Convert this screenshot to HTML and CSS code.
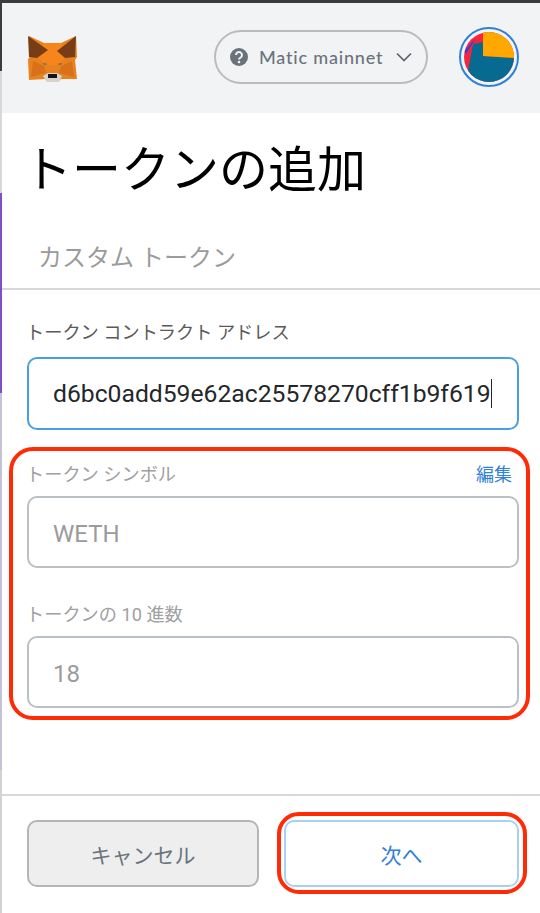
FILE: index.html
```html
<!DOCTYPE html>
<html lang="ja">
<head>
    <meta charset="UTF-8">
    <meta name="viewport" content="width=device-width, initial-scale=1.0">
    <title>トークンの追加</title>
    <link rel="stylesheet" href="styles.css">
</head>
<body>
    <div class="top-edge"></div>
    <div class="window">
        <!-- page behind the popup, only a sliver of it shows -->
        <div class="behind">
            <div class="behind-dark"></div>
            <div class="behind-light"></div>
            <div class="behind-purple"></div>
            <div class="behind-lavender"></div>
            <div class="behind-grey"></div>
        </div>

        <div class="popup">
            <header class="app-bar">
                <svg class="fox" viewBox="0 0 50 48" aria-hidden="true">
                    <polygon fill="#e8821e" points="1,1 16,8 33,8 48,1 49,22 47,25 49,44 33,44 30,47 20,47 17,44 1,45 0,24 2,22"/>
                    <polygon fill="#f6851b" points="16,8 33,8 37,23 31,30 19,30 10,23"/>
                    <polygon fill="#d9701a" points="5,26 16,31 18,38 3,42"/>
                    <polygon fill="#d9701a" points="44,26 33,31 31,38 46,42"/>
                    <polygon fill="#763d16" points="0,1 20,15 9,23 1,22"/>
                    <polygon fill="#763d16" points="48,1 29,16 37,23 47,22"/>
                    <polygon fill="#d7d2cc" points="15,41 20,38 29,38 34,41 31,47 19,47"/>
                    <polygon fill="#161616" points="20,39 29,39 29,43 20,43"/>
                    <polygon fill="#5c6b7a" points="15,28 20,29 16,30"/>
                    <polygon fill="#5c6b7a" points="34,28 29,29 33,30"/>
                </svg>
                <div class="network">
                    <svg class="help-icon" viewBox="0 0 18 18" aria-hidden="true">
                        <circle cx="9" cy="9" r="9" fill="#6a737d"/>
                        <path d="M6 7a3 3 0 1 1 4.6 2.5C9.500 10.200 9 10.600 9 11.500" fill="none" stroke="#f2f3f4" stroke-width="2"/>
                        <circle cx="9" cy="14" r="1.300" fill="#f2f3f4"/>
                    </svg>
                    <span class="network-name">Matic mainnet</span>
                    <svg class="caret-down" viewBox="0 0 16 10" aria-hidden="true">
                        <path d="M1 1.500l7 7 7-7" fill="none" stroke="#5d646b" stroke-width="1.700"/>
                    </svg>
                </div>
                <div class="account">
                    <svg viewBox="0 0 50 50" aria-hidden="true">
                        <defs><clipPath id="avatar-clip"><circle cx="25" cy="25" r="25"/></clipPath></defs>
                        <g clip-path="url(#avatar-clip)">
                            <rect width="50" height="50" fill="#f5263c"/>
                            <polygon fill="#3a3fd0" points="0,19 11,7 9,11 2,22"/>
                            <polygon fill="#076b91" points="3,44 9,12 19,10 19,24 50,26 50,50 3,50"/>
                            <polygon fill="#ffa800" points="19,0 50,0 50,26 19,24"/>
                        </g>
                    </svg>
                </div>
            </header>

            <main class="content">
                <h1 class="title">トークンの追加</h1>
                <div class="tab">カスタム トークン</div>

                <form class="form">
                    <div class="field">
                        <label class="label">トークン コントラクト アドレス</label>
                        <div class="input input-focus"><span class="typed">d6bc0add59e62ac25578270cff1b9f619</span></div>
                    </div>
                    <div class="field field-symbol">
                        <div class="label-row">
                            <label class="label label-muted">トークン シンボル</label>
                            <a class="edit-link">編集</a>
                        </div>
                        <div class="input input-muted">WETH</div>
                    </div>
                    <div class="field field-decimals">
                        <label class="label label-muted">トークンの 10 進数</label>
                        <div class="input input-muted">18</div>
                    </div>
                </form>
            </main>

            <footer class="footer">
                <button class="btn btn-cancel">キャンセル</button>
                <button class="btn btn-next">次へ</button>
            </footer>

            <!-- red marks drawn on the screenshot -->
            <div class="mark mark-fields"></div>
            <div class="mark mark-next"></div>
        </div>
    </div>
</body>
</html>
```

FILE: styles.css
```css
* {
    box-sizing: border-box;
}
html, body {
    margin: 0;
    padding: 0;
}
body {
    width: 540px;
    height: 913px;
    overflow: hidden;
    background-color: #fff;
    font-family: Roboto, "Noto Sans CJK JP", sans-serif;
    display: flex;
    flex-direction: column;
}
.top-edge {
    height: 3px;
    background-color: #3c3c3e;
}
.window {
    flex: 1;
    display: flex;
    min-height: 0;
}

/* sliver on the left */
.behind {
    width: 2px;
    display: flex;
    flex-direction: column;
}
.behind-dark {
    height: 68px;
    background-color: #3c3c3e;
}
.behind-light {
    height: 122px;
    background-color: #d8d8dc;
}
.behind-purple {
    height: 200px;
    background-color: #7e4fc6;
}
.behind-lavender {
    height: 377px;
    background-color: #c4c2d6;
}
.behind-grey {
    flex: 1;
    background-color: #d2d2d4;
}

.popup {
    flex: 1;
    position: relative;
    display: flex;
    flex-direction: column;
}

/* header */
.app-bar {
    height: 110px;
    background-color: #f2f3f4;
    display: flex;
    align-items: center;
    padding: 0 21px 0 26px;
}
.fox {
    width: 50px;
    height: 48px;
    margin-top: 2px;
}
.network {
    margin-left: auto;
    width: 214px;
    height: 54px;
    margin-top: -3px;
    border: 2px solid #b7bcc1;
    border-radius: 27px;
    display: flex;
    align-items: center;
    padding: 0 14px;
    color: #6a737d;
}
.help-icon {
    width: 18px;
    height: 18px;
}
.network-name {
    margin-left: 11px;
    font-family: Lato, "Open Sans", sans-serif;
    font-size: 18px;
    font-weight: 500;
    letter-spacing: 0.8px;
}
.caret-down {
    margin-left: auto;
    width: 16px;
    height: 10px;
}
.account {
    margin-left: 31px;
    width: 60px;
    height: 60px;
    margin-top: -3px;
    border: 2px solid #2f80d8;
    border-radius: 50%;
    padding: 3px;
}
.account svg {
    display: block;
    width: 50px;
    height: 50px;
}

/* body */
.content {
    flex: 1;
}
.title {
    margin: 29px 0 0 21px;
    font-size: 49px;
    line-height: 58px;
    font-weight: 400;
    color: #000;
}
.tab {
    height: 90px;
    padding: 40px 0 0 36px;
    font-size: 24px;
    line-height: 36px;
    color: #9b9b9b;
    border-bottom: 2px solid #d6d9dc;
}
.form {
    padding: 30px 21px 0 25px;
    display: flex;
    flex-direction: column;
}
.field-symbol {
    margin-top: 32px;
}
.field-decimals {
    margin-top: 34px;
}
.label-row {
    display: flex;
    justify-content: space-between;
}
.label {
    display: block;
    margin-left: -1px;
    font-size: 18.200px;
    line-height: 26px;
    color: #5a5a5a;
}
.label-muted {
    color: #a0a0a0;
}
.edit-link {
    padding-right: 7px;
    font-size: 18px;
    line-height: 26px;
    color: #2f80d8;
}
.input {
    height: 72px;
    margin-top: 11px;
    padding: 0 24px;
    border-radius: 10px;
    display: flex;
    align-items: center;
    font-size: 24px;
    overflow: hidden;
}
.input-focus {
    height: 73px;
    border: 2px solid #4a9fe0;
    color: #24272a;
    font-size: 24.700px;
}
.input-muted {
    padding-top: 3px;
    border: 2px solid #bbc0c5;
    color: #9b9b9b;
}
.field-symbol .input {
    margin-top: 8px;
}
.field-decimals .input {
    margin-top: 8px;
}
.typed {
    border-right: 1.500px solid #24272a;
    white-space: nowrap;
}

/* footer */
.footer {
    height: 119px;
    border-top: 2px solid #d6d9dc;
    display: flex;
    gap: 25px;
    padding: 24px 21px 0 25px;
}
.btn {
    height: 67px;
    border-radius: 10px;
    font-family: Roboto, "Noto Sans CJK JP", sans-serif;
    font-size: 21px;
    background-color: #fff;
}
.btn-cancel {
    width: 232px;
    border: 2px solid #b5b5b5;
    background-color: #eeeeee;
    color: #6a737d;
}
.btn-next {
    flex: 1;
    border: 2px solid #a9d0f0;
    color: #2f80d8;
}

/* annotations */
.mark {
    position: absolute;
    border: 4px solid #ff2a06;
    pointer-events: none;
}
.mark-fields {
    left: 7px;
    top: 444px;
    width: 521px;
    height: 273px;
    border-radius: 24px;
}
.mark-next {
    left: 275px;
    top: 809px;
    width: 250px;
    height: 82px;
    border-radius: 22px;
}
```
